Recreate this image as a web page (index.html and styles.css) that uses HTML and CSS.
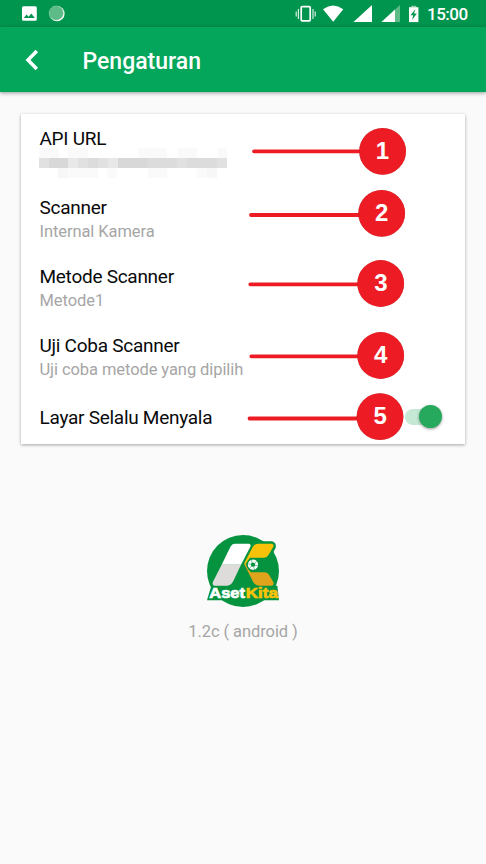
FILE: index.html
```html
<!DOCTYPE html>
<html lang="id">
<head>
<meta charset="utf-8">
<title>Pengaturan</title>
<link rel="stylesheet" href="styles.css">
</head>
<body>
<header class="status">
  <svg class="status-icons" width="60" height="27" viewBox="0 0 60 27">
    <path fill="#fff" fill-rule="evenodd" d="M3.500 6.300h11.800q1.500 0 1.500 1.500v11.500q0 1.500-1.500 1.500H3.500Q2 20.800 2 19.300V7.800q0-1.500 1.500-1.500zM3.800 18h11l-3.500-4.600-2.700 3.300-2-2.200z"/>
    <circle cx="37" cy="13.700" r="7.600" fill="#fff"/>
    <circle cx="36.200" cy="13" r="7.200" fill="#5dbb88"/>
    <circle cx="36.200" cy="13" r="7" fill="none" stroke="#8fd0ab" stroke-width=".8" stroke-dasharray="1 1"/>
  </svg>
  <div class="status-right">
    <svg width="126" height="27" viewBox="294 0 126 27">
      <rect x="301.200" y="6.600" width="9" height="14.200" rx="1" fill="none" stroke="#fff" stroke-width="1.700"/>
      <path d="M298.400 9v10M296.200 11.500v5M313 9v10M315.200 11.500v5" stroke="#d8efe2" stroke-width="1.200"/>
      <path d="M323 9.200Q333 1.800 343.300 9.200L333.200 21.800z" fill="#fff"/>
      <path d="M353.500 22L372 5v17z" fill="#fff"/>
      <path d="M381.500 22L400 5v17z" fill="#5dbb88"/>
      <path d="M381.500 22L395 9.600V22z" fill="#fff"/>
      <path d="M411.200 5.800h5v1.400h-5z" fill="#8fd0ab"/>
      <path d="M409 7.200h9.400v14.900H409z" fill="#fff"/>
      <path d="M415.500 9l-5 6.200h2.700l-1.200 4.800 4.900-6.500H414z" fill="#00954f"/>
    </svg>
    <span class="clock">15:00</span>
  </div>
</header>
<nav class="appbar">
  <svg class="back" width="16" height="22" viewBox="0 0 16 22"><path d="M12.800 2L4 11l8.800 9" fill="none" stroke="#fff" stroke-width="3.500"/></svg>
  <h1>Pengaturan</h1>
</nav>
<main>
  <section class="card">
    <div class="row">
      <div class="title api">API URL</div>
      <svg class="mosaic" width="198" height="30" viewBox="39 148 198 30" shape-rendering="crispEdges">
        <path fill="#fafafa" d="M39 148h20v10H39zM68 148h20v10H68zM138 148h10v10h-10zM148 148h19v10h-19zM177 148h20v10h-20zM217 148h10v10h-10zM58 168h10v10H58zM68 168h30v10H68zM107 168h10v10h-10zM148 168h19v10h-19zM197 168h10v10h-10z"/>
        <path fill="#f7f7f7" d="M58 168h10v10H58zM207 168h10v10h-10z"/>
        <path fill="#dcdcdc" d="M39 158h188v10H39z"/>
        <path fill="#e8e8e8" d="M68 158h10v10H68zM108 158h10v10h-10z"/>
        <path fill="#e1e1e1" d="M39 158h10v10H39zM78 158h10v10H78zM98 158h10v10H98zM177 158h10v10h-10zM217 158h10v10h-10z"/>
        <path fill="#d8d8d8" d="M49 158h19v10H49zM118 158h29v10h-29z"/>
      </svg>
    </div>
    <div class="row"><div class="title">Scanner</div><div class="sub">Internal Kamera</div></div>
    <div class="row"><div class="title">Metode Scanner</div><div class="sub">Metode1</div></div>
    <div class="row"><div class="title">Uji Coba Scanner</div><div class="sub">Uji coba metode yang dipilih</div></div>
    <div class="row switch-row"><div class="title">Layar Selalu Menyala</div><div class="switch"></div></div>
    <svg class="callouts" width="444" height="330" viewBox="21 114 444 330">
      <g class="leads">
        <path d="M254 151.300H370M251 215H370M250.300 284.300H370M251.300 356.300H370M249.500 418.500H370"/>
      </g>
      <g class="discs">
        <circle cx="382.600" cy="151.300" r="23.400"/>
        <circle cx="381.700" cy="213.300" r="23.400"/>
        <circle cx="380.700" cy="283.500" r="23.400"/>
        <circle cx="380.700" cy="355.500" r="23.400"/>
        <circle cx="380" cy="416.700" r="23.400"/>
      </g>
      <g class="digits">
        <text x="382.500" y="159">1</text>
        <text x="381.800" y="220.700">2</text>
        <text x="381" y="291">3</text>
        <text x="380.700" y="362.900">4</text>
        <text x="380.300" y="424">5</text>
      </g>
    </svg>
  </section>
  <footer>
    <svg class="logo" width="88" height="86" viewBox="0 0 264 258">
      <circle cx="129" cy="129" r="108" fill="#05933f"/>
      <path d="M34 173h198l5 44H21z" fill="#05933f"/>
      <path d="M160 40h56q14 4 11 19l-16 32h-50z" fill="#05933f"/>
      <path d="M105 47h42q7 2 4 9L123 110H65L91 57q5-10 14-10z" fill="#fff"/>
      <path d="M65 110h58L100 159q-7 14-19 14H44q-9-2-5-12z" fill="#dedcda"/>
      <path d="M174 47h42q7 2 4 9l-14 24q-5 9-13 9h-43l-12 18h-6l26-50q6-10 16-10z" fill="#f9c20a"/>
      <path d="M132 107h6l14 26h43q8 0 13 9l12 21q3 8-4 10h-38q-12 0-18-10z" fill="#e0a41c"/>
      <circle cx="159" cy="110" r="20" fill="#05933f"/>
      <circle cx="159" cy="110" r="11" fill="none" stroke="#fff" stroke-width="9"/>
      <path d="M154 94l3 11M170 98l-5 9M175 113l-11-1M164 126l-3-10M148 122l6-8M143 107l10 2" stroke="#05933f" stroke-width="1.500"/>
      <g class="logo-text">
        <text class="aset" x="28" y="210" textLength="107" lengthAdjust="spacingAndGlyphs">Aset</text>
        <text class="kita" x="137" y="210" textLength="97" lengthAdjust="spacingAndGlyphs">Kita</text>
      </g>
    </svg>
    <div class="version">1.2c ( android )</div>
  </footer>
</main>
</body>
</html>
```
FILE: styles.css
```css
* { box-sizing: border-box; }
body {
  margin: 0;
  height: 864px;
  background: #fafafa;
  font-family: Roboto, "Liberation Sans", sans-serif;
  overflow: hidden;
}
.status {
  height: 27px;
  background: #00954f;
  display: flex;
  justify-content: space-between;
  padding: 0 18px 0 20px;
}
.status svg { display: block; }
.status-right { display: flex; }
.clock {
  width: 48px;
  padding-left: 7px;
  font-size: 17px;
  letter-spacing: -.500px;
  line-height: 29px;
  font-weight: 500;
  color: #fff;
  white-space: nowrap;
}
.appbar {
  height: 65px;
  background: #03a65a;
  display: flex;
  align-items: center;
  padding: 1px 0 0 24px;
  box-shadow: 0 1px 4px rgba(0, 0, 0, .4);
}
.appbar h1 {
  margin: 3px 0 0 42.500px;
  color: #fff;
  font-size: 23px;
  line-height: 28px;
  font-weight: 500;
}
main { padding: 22px 21px 0; }
.card {
  position: relative;
  height: 330px;
  padding: 13px 18.500px 0;
  background: #fff;
  box-shadow: 0 1px 3px rgba(0, 0, 0, .35);
}
.row { height: 69px; }
.title {
  height: 24px;
  font-size: 19px;
  letter-spacing: -.270px;
  line-height: 24px;
  color: #0a0a0a;
  white-space: nowrap;
}
.sub {
  height: 23px;
  font-size: 16.500px;
  letter-spacing: -.080px;
  line-height: 23px;
  color: #a6a6a6;
  white-space: nowrap;
}
.mosaic { display: block; margin: -3px 0 0 -.500px; }
.switch-row {
  display: flex;
  justify-content: space-between;
  padding-top: 3px;
}
.switch {
  position: relative;
  width: 36px;
  height: 16px;
  margin: 3px 5.500px 0 0;
  border-radius: 8px;
  background: #c5e9d4;
}
.switch::after {
  content: "";
  position: absolute;
  top: -4px;
  right: -1px;
  width: 23px;
  height: 23px;
  border-radius: 50%;
  background: #27a95d;
  box-shadow: 0 1px 3px rgba(0, 0, 0, .4);
}
.callouts { position: absolute; inset: 0; }
.leads { stroke: #ed1c24; stroke-width: 3.800; stroke-linecap: round; }
.discs { fill: #ed1c24; filter: drop-shadow(.500px .700px .600px rgba(0, 0, 0, .35)); }
.digits {
  font: bold 24px "Liberation Sans", sans-serif;
  fill: #fff;
  text-anchor: middle;
}
footer {
  display: flex;
  flex-direction: column;
  align-items: center;
  padding-top: 84px;
}
.logo { display: block; margin-left: 2px; }
.logo-text { font: bold 43px "Liberation Sans", sans-serif; stroke-width: 2; }
.aset { fill: #fff; stroke: #fff; }
.kita { fill: #f9c20a; stroke: #f9c20a; }
.version {
  margin-top: 6px;
  font-size: 16.500px;
  letter-spacing: -.080px;
  line-height: 24px;
  color: #a6a6a6;
}
```
